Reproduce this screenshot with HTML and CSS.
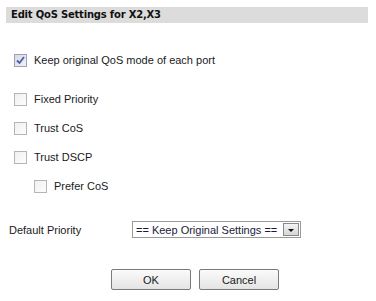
FILE: index.html
```html
<!DOCTYPE html>
<html lang="en">
<head>
    <meta charset="UTF-8">
    <title>Edit QoS Settings</title>
    <link rel="stylesheet" href="styles.css">
</head>
<body>
    <div class="dialog">
        <div class="title-bar">Edit QoS Settings for X2,X3</div>

        <div class="option option-keep">
            <span class="check checked">
                <svg width="11" height="11" viewBox="0 0 11 11"><path d="M2 5.5 L4.5 8 L9 2" fill="none" stroke="#4a5fb0" stroke-width="1.8"/></svg>
            </span>
            <span class="label">Keep original QoS mode of each port</span>
        </div>

        <div class="modes">
            <div class="option"><span class="check"></span><span class="label">Fixed Priority</span></div>
            <div class="option"><span class="check"></span><span class="label">Trust CoS</span></div>
            <div class="option"><span class="check"></span><span class="label">Trust DSCP</span></div>
            <div class="option sub"><span class="check"></span><span class="label">Prefer CoS</span></div>
        </div>

        <div class="field">
            <span class="field-label">Default Priority</span>
            <div class="select">
                <span class="select-text">== Keep Original Settings ==</span>
                <span class="select-btn"><span class="arrow"></span></span>
            </div>
        </div>

        <div class="actions">
            <button class="btn">OK</button>
            <button class="btn">Cancel</button>
        </div>
    </div>
</body>
</html>
```

FILE: styles.css
```css
body {
    margin: 0;
    padding: 0;
    background-color: #fff;
    font-family: "Liberation Sans", Arial, sans-serif;
    font-size: 11px;
    color: #1a1a1a;
}

.dialog {
    padding: 7px 8px 0 6px;
}

.title-bar {
    height: 16px;
    line-height: 16px;
    background-color: #dcdcdc;
    padding-left: 5px;
    font-family: "DejaVu Sans", sans-serif;
    font-size: 10px;
    letter-spacing: -0.2px;
    font-weight: bold;
    color: #111;
}

.option {
    display: flex;
    align-items: center;
    height: 15px;
    padding-left: 8px;
}

.option-keep {
    margin-top: 30px;
}

.modes {
    display: flex;
    flex-direction: column;
    gap: 14px;
    margin-top: 24px;
}

.option.sub {
    padding-left: 28px;
}

.check {
    display: flex;
    align-items: center;
    justify-content: center;
    width: 11px;
    height: 11px;
    border: 1px solid #b5b5b5;
    background: linear-gradient(135deg, #f0f0f0, #fdfdfd);
    margin-right: 7px;
}

.check.checked {
    border-color: #9aa3b5;
    background: linear-gradient(135deg, #d8dbe2, #f0f1f4);
}

.label {
    line-height: 15px;
}

.field {
    display: flex;
    align-items: center;
    margin-top: 27px;
    padding-left: 3px;
}

.field-label {
    width: 123px;
}

.select {
    display: flex;
    align-items: center;
    width: 167px;
    height: 15px;
    border: 1px solid #9a9a9a;
    background: #fff;
}

.select-text {
    flex: 1;
    padding-left: 3px;
    color: #1a1a3a;
    font-size: 11px;
}

.select-btn {
    display: flex;
    align-items: center;
    justify-content: center;
    width: 14px;
    height: 11px;
    margin-right: 1px;
    border: 1px solid #8a8a8a;
    background: linear-gradient(#f4f4f4, #d6d6d6);
}

.arrow {
    width: 0;
    height: 0;
    border-left: 3px solid transparent;
    border-right: 3px solid transparent;
    border-top: 3px solid #111;
    margin-top: 2px;
}

.actions {
    display: flex;
    justify-content: center;
    gap: 8px;
    margin-top: 31px;
    padding-left: 16px;
}

.btn {
    width: 80px;
    height: 21px;
    border: 1px solid #7a7a7a;
    border-radius: 2px;
    background: linear-gradient(#fbfbfb, #e4e4e4);
    font-family: "Liberation Sans", Arial, sans-serif;
    font-size: 11px;
    color: #1a1a1a;
    padding: 0;
}
```
